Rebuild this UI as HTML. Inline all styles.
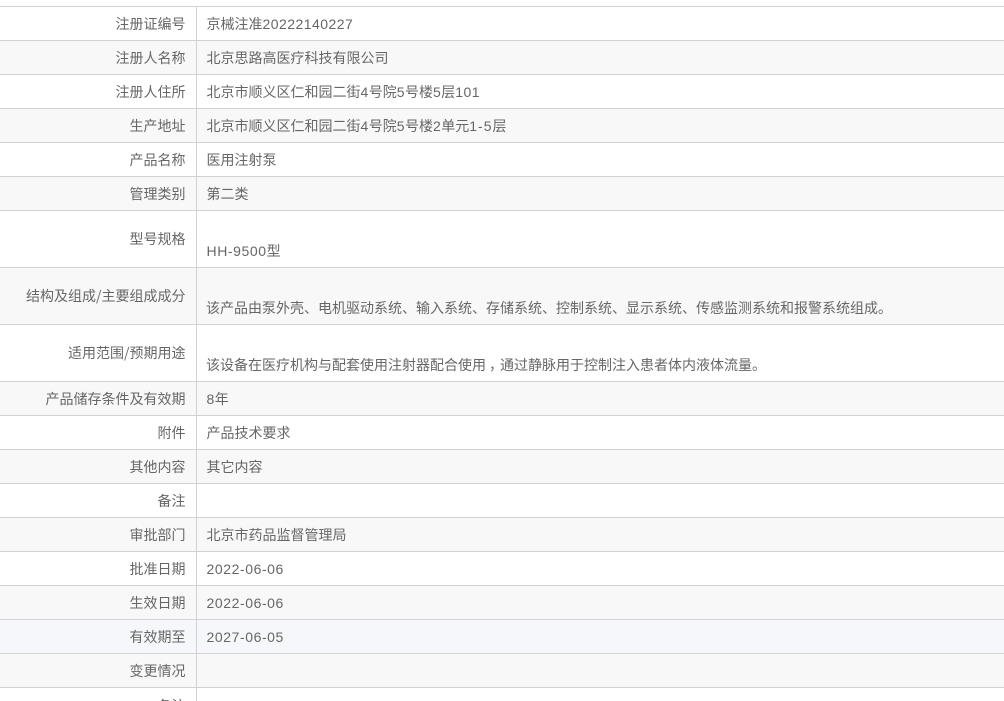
<!DOCTYPE html>
<html lang="zh-CN">
<head>
<meta charset="utf-8">
<title>注册证信息</title>
<style>
html,body{margin:0;padding:0;background:#fff;}
#p{position:relative;width:1004px;height:701px;overflow:hidden;background:#fff;font-family:"Noto Sans CJK SC","Liberation Sans",sans-serif;font-size:14px;color:#666;}
.r{position:absolute;left:0;width:1004px;box-sizing:border-box;border-top:1px solid #d2d2d2;}
.g{background:#f8f8f8;}
.h{background:#f5f7fa;}
.l{position:absolute;left:0;width:185.5px;text-align:right;line-height:20px;white-space:nowrap;}
.v{position:absolute;left:206.5px;line-height:20px;white-space:nowrap;font-family:"Liberation Sans","Noto Sans CJK SC",sans-serif;}
.w{left:206px;}
.x{position:absolute;left:196px;top:0;bottom:0;width:1px;background:#d2d2d2;}
i{font-style:normal;letter-spacing:.46px;}
i.d{letter-spacing:.58px;}
i.e{letter-spacing:1px;}
b{font-weight:normal;position:relative;left:3px;}
</style>
</head>
<body>
<div id="p">
<div class="r" style="top:6px;height:34px"><div class="x"></div><div class="l" style="top:7px">注册证编号</div><div class="v" style="top:7px">京械注准<i>20222140227</i></div></div>
<div class="r g" style="top:40px;height:34px"><div class="x"></div><div class="l" style="top:7px">注册人名称</div><div class="v" style="top:7px">北京思路高医疗科技有限公司</div></div>
<div class="r" style="top:74px;height:34px"><div class="x"></div><div class="l" style="top:7px">注册人住所</div><div class="v" style="top:7px">北京市顺义区仁和园二街<i>4</i>号院<i>5</i>号楼<i>5</i>层<i>101</i></div></div>
<div class="r g" style="top:108px;height:34px"><div class="x"></div><div class="l" style="top:7px">生产地址</div><div class="v" style="top:7px">北京市顺义区仁和园二街<i>4</i>号院<i>5</i>号楼<i>2</i>单元<i class="e">1-5</i>层</div></div>
<div class="r" style="top:142px;height:34px"><div class="x"></div><div class="l" style="top:7px">产品名称</div><div class="v" style="top:7px">医用注射泵</div></div>
<div class="r g" style="top:176px;height:34px"><div class="x"></div><div class="l" style="top:7px">管理类别</div><div class="v" style="top:7px">第二类</div></div>
<div class="r" style="top:210px;height:57px"><div class="x"></div><div class="l" style="top:18px">型号规格</div><div class="v" style="top:30px"><i class="d">HH-9500</i>型</div></div>
<div class="r g" style="top:267px;height:57px"><div class="x"></div><div class="l" style="top:18px">结构及组成/主要组成成分</div><div class="v w" style="top:30px">该产品由泵外壳、电机驱动系统、输入系统、存储系统、控制系统、显示系统、传感监测系统和报警系统组成。</div></div>
<div class="r" style="top:324px;height:57px"><div class="x"></div><div class="l" style="top:18px">适用范围/预期用途</div><div class="v w" style="top:30px">该设备在医疗机构与配套使用注射器配合使用<b>，</b>通过静脉用于控制注入患者体内液体流量。</div></div>
<div class="r g" style="top:381px;height:34px"><div class="x"></div><div class="l" style="top:7px">产品储存条件及有效期</div><div class="v" style="top:7px"><i>8</i>年</div></div>
<div class="r" style="top:415px;height:34px"><div class="x"></div><div class="l" style="top:7px">附件</div><div class="v" style="top:7px">产品技术要求</div></div>
<div class="r g" style="top:449px;height:34px"><div class="x"></div><div class="l" style="top:7px">其他内容</div><div class="v" style="top:7px">其它内容</div></div>
<div class="r" style="top:483px;height:34px"><div class="x"></div><div class="l" style="top:7px">备注</div></div>
<div class="r g" style="top:517px;height:34px"><div class="x"></div><div class="l" style="top:7px">审批部门</div><div class="v" style="top:7px">北京市药品监督管理局</div></div>
<div class="r" style="top:551px;height:34px"><div class="x"></div><div class="l" style="top:7px">批准日期</div><div class="v" style="top:7px"><i class="d">2022-06-06</i></div></div>
<div class="r g" style="top:585px;height:34px"><div class="x"></div><div class="l" style="top:7px">生效日期</div><div class="v" style="top:7px"><i class="d">2022-06-06</i></div></div>
<div class="r h" style="top:619px;height:34px"><div class="x"></div><div class="l" style="top:7px">有效期至</div><div class="v" style="top:7px"><i class="d">2027-06-05</i></div></div>
<div class="r g" style="top:653px;height:34px"><div class="x"></div><div class="l" style="top:7px">变更情况</div></div>
<div class="r" style="top:687px;height:34px"><div class="x"></div><div class="l" style="top:8px">备注</div></div>
</div>
</body>
</html>
